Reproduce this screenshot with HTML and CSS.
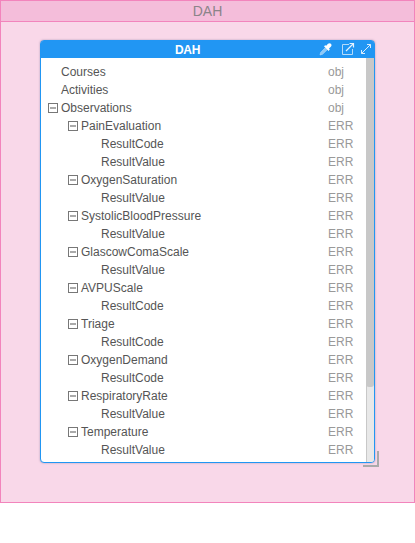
FILE: index.html
```
<!DOCTYPE html>
<html lang="en">
<head>
<meta charset="utf-8">
<title>DAH</title>
<link rel="stylesheet" href="styles.css">
</head>
<body>
<section class="zone">
  <header class="zone-title">DAH</header>
  <article class="panel">
    <header class="panel-head">
      <span class="panel-title">DAH</span>
      <div class="tools">
        <svg class="tool dropper" width="13" height="14" viewBox="0 0 13 14"><path d="M1 13 L1.6 10.6 L6.4 5.6 L8.4 7.6 L3.6 12.2 Z" fill="#8cc8f8" stroke="#b5dbfa" stroke-width=".6"/><path d="M5 4.2 L6.2 3.2 L7.2 3.8 L9 1.8 Q10.6 .5 11.9 1.8 Q13.2 3.2 11.8 4.7 L10 6.6 L10.8 7.6 L9.6 9 Z" fill="#fff"/></svg>
        <svg class="tool" width="14" height="14" viewBox="0 0 14 14" fill="none" stroke="#b5dbfa"><path d="M8 2.5 H1.5 V12.5 H11.5 V7"/><path d="M5 9 L12 2 M8.5 1.5 H12.5 V5.5" stroke="#e4f2fe" stroke-width="1.2"/></svg>
        <svg class="tool" width="12" height="14" viewBox="0 0 12 14" fill="none" stroke="#d8ecfd"><path d="M1.5 11.5 L10.5 2.5 M7 2.5 H10.5 V6 M1.5 8 V11.5 H5"/></svg>
      </div>
    </header>
    <div class="panel-body">
      <ul class="tree">
        <li class="row l1"><span class="name">Courses</span><span class="type">obj</span></li>
        <li class="row l1"><span class="name">Activities</span><span class="type">obj</span></li>
        <li class="row l1"><i class="toggle"></i><span class="name">Observations</span><span class="type">obj</span></li>
        <li class="row l2"><i class="toggle"></i><span class="name">PainEvaluation</span><span class="type">ERR</span></li>
        <li class="row l3"><span class="name">ResultCode</span><span class="type">ERR</span></li>
        <li class="row l3"><span class="name">ResultValue</span><span class="type">ERR</span></li>
        <li class="row l2"><i class="toggle"></i><span class="name">OxygenSaturation</span><span class="type">ERR</span></li>
        <li class="row l3"><span class="name">ResultValue</span><span class="type">ERR</span></li>
        <li class="row l2"><i class="toggle"></i><span class="name">SystolicBloodPressure</span><span class="type">ERR</span></li>
        <li class="row l3"><span class="name">ResultValue</span><span class="type">ERR</span></li>
        <li class="row l2"><i class="toggle"></i><span class="name">GlascowComaScale</span><span class="type">ERR</span></li>
        <li class="row l3"><span class="name">ResultValue</span><span class="type">ERR</span></li>
        <li class="row l2"><i class="toggle"></i><span class="name">AVPUScale</span><span class="type">ERR</span></li>
        <li class="row l3"><span class="name">ResultCode</span><span class="type">ERR</span></li>
        <li class="row l2"><i class="toggle"></i><span class="name">Triage</span><span class="type">ERR</span></li>
        <li class="row l3"><span class="name">ResultCode</span><span class="type">ERR</span></li>
        <li class="row l2"><i class="toggle"></i><span class="name">OxygenDemand</span><span class="type">ERR</span></li>
        <li class="row l3"><span class="name">ResultCode</span><span class="type">ERR</span></li>
        <li class="row l2"><i class="toggle"></i><span class="name">RespiratoryRate</span><span class="type">ERR</span></li>
        <li class="row l3"><span class="name">ResultValue</span><span class="type">ERR</span></li>
        <li class="row l2"><i class="toggle"></i><span class="name">Temperature</span><span class="type">ERR</span></li>
        <li class="row l3"><span class="name">ResultValue</span><span class="type">ERR</span></li>
      </ul>
      <div class="track"><div class="thumb"></div></div>
    </div>
    <i class="grip"></i>
  </article>
</section>
</body>
</html>
```
FILE: styles.css
```
* { box-sizing: border-box; }
body {
  margin: 0;
  background: #fff;
  font-family: "Liberation Sans", Arial, sans-serif;
  font-size: 12px;
}
.zone {
  width: 415px;
  height: 503px;
  border: 1px solid #f284bc;
  background: #f9d8e9;
}
.zone-title {
  height: 21px;
  border-bottom: 1px solid #f284bc;
  background: #f4bdda;
  color: #8b8489;
  font-size: 14px;
  line-height: 20px;
  text-align: center;
}
.panel {
  position: relative;
  width: 335px;
  height: 423px;
  margin: 18px 0 0 39px;
  border: 1px solid #2196f3;
  border-radius: 4px;
  background: #fff;
  box-shadow: 0 0 2px rgba(90, 90, 130, .5);
  display: flex;
  flex-direction: column;
}
.panel-head {
  height: 17px;
  flex: none;
  display: flex;
  align-items: flex-start;
  background: #2196f3;
  border-radius: 2px 2px 0 0;
  color: #fff;
}
.panel-title {
  flex: 1;
  padding-left: 15px;
  font-weight: bold;
  line-height: 18px;
  text-align: center;
  letter-spacing: -.3px;
}
.tools {
  display: flex;
  gap: 5px;
  padding: 1px 2px 0 0;
}
.tool { display: block; }
.dropper { margin-right: 4px; }
.panel-body {
  flex: 1;
  min-height: 0;
  display: flex;
}
.tree {
  flex: 1;
  list-style: none;
  margin: 0;
  padding: 5px 0 0;
}
.row {
  display: flex;
  align-items: center;
  height: 18px;
  line-height: 18px;
}
.l1 { padding-left: 20px; }
.l2 { padding-left: 40px; }
.l3 { padding-left: 60px; }
.name {
  flex: 1;
  color: #555;
}
.type {
  width: 38px;
  color: #999;
}
.toggle {
  width: 10px;
  height: 10px;
  margin: 0 3px 0 -13px;
  border: 1px solid #777;
  background: linear-gradient(#aaa, #aaa) center / 6px 2px no-repeat;
}
.track {
  width: 8px;
  background: #e8e8e8;
  border-left: 1px solid #c8c8c8;
  border-radius: 0 0 3px 0;
}
.thumb {
  height: 329px;
  margin-left: -1px;
  background: #c8c8c8;
  border-radius: 0 0 3px 3px;
}
.grip {
  position: absolute;
  right: -5px;
  bottom: -5px;
  width: 16px;
  height: 16px;
  border-right: 2px solid #aaa;
  border-bottom: 2px solid #aaa;
}
```
